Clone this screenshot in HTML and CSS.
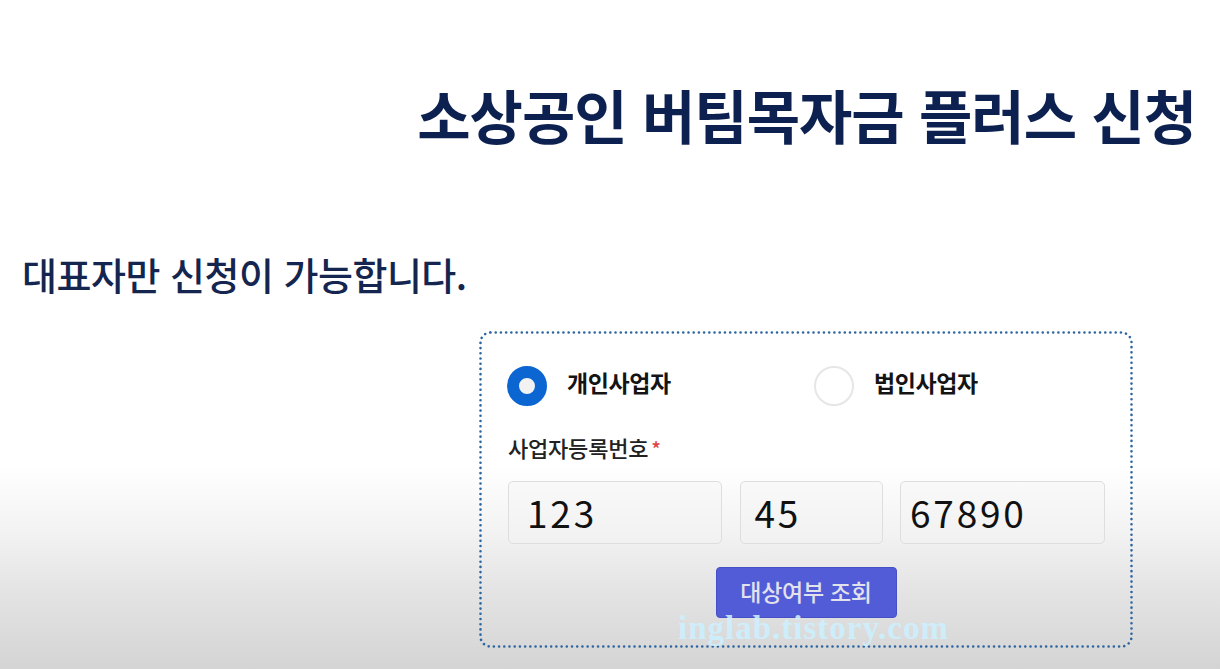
FILE: index.html
```html
<!DOCTYPE html>
<html lang="ko">
<head>
<meta charset="utf-8">
<title>소상공인 버팀목자금 플러스 신청</title>
<link rel="stylesheet" href="styles.css">
</head>
<body>
<div class="page">
  <h1 class="title">소상공인 버팀목자금 플러스 신청</h1>
  <p class="notice">대표자만 신청이 가능합니다.</p>
  <div class="card">
    <svg class="card-border" width="654" height="317" viewBox="0 0 654 317">
      <rect x="1.5" y="1.5" width="651" height="314" rx="10" ry="10" fill="none" stroke="#2c66a0" stroke-width="2.6" stroke-linecap="round" stroke-dasharray="0.01 5.2"/>
    </svg>
    <div class="radio-row">
      <label class="option option-first">
        <span class="radio radio-on"></span>
        <span class="option-text">개인사업자</span>
      </label>
      <label class="option">
        <span class="radio"></span>
        <span class="option-text">법인사업자</span>
      </label>
    </div>
    <div class="field-label">사업자등록번호<span class="req">*</span></div>
    <div class="inputs">
      <div class="input">123</div>
      <div class="input input-mid">45</div>
      <div class="input input-last">67890</div>
    </div>
    <div class="actions">
      <button class="btn" type="button">대상여부 조회</button>
    </div>
    <div class="watermark">inglab.tistory.com</div>
  </div>
</div>
</body>
</html>
```

FILE: styles.css
```css
html, body {
  margin: 0;
  padding: 0;
}
body {
  width: 1220px;
  height: 669px;
  overflow: hidden;
  background: linear-gradient(to bottom, #ffffff 0px, #ffffff 465px, #f3f3f3 530px, #e4e4e4 590px, #d4d4d4 669px);
  font-family: "Noto Sans CJK KR", "Noto Sans", sans-serif;
}
.page {
  display: flex;
  flex-direction: column;
}
.title {
  margin: 79px 24px 0 0;
  text-align: right;
  font-size: 58px;
  line-height: 70px;
  font-weight: 700;
  color: #0c2150;
  letter-spacing: -1px;
}
.notice {
  margin: 101px 0 0 22px;
  font-size: 38px;
  line-height: 48px;
  font-weight: 500;
  color: #142650;
  letter-spacing: -0.5px;
}
.card {
  position: relative;
  margin: 34px 0 0 480px;
  width: 652px;
  height: 315px;
  box-sizing: border-box;
  padding: 34px 27px 0 27px;
  display: flex;
  flex-direction: column;
}
.card-border {
  position: absolute;
  left: -1px;
  top: -1px;
  pointer-events: none;
}
.radio-row {
  display: flex;
  height: 40px;
}
.option {
  display: flex;
  align-items: center;
  flex: 1 1 auto;
}
.option-first {
  flex: none;
  width: 307px;
}
.radio {
  width: 40px;
  height: 40px;
  border-radius: 50%;
  box-sizing: border-box;
  border: 2px solid #e6e6e6;
  background: #fff;
  flex: none;
}
.radio-on {
  border: 12px solid #0b66d2;
  background: #f2f2f2;
}
.option-text {
  margin: 0 0 8px 20px;
  font-size: 23px;
  line-height: 32px;
  font-weight: 700;
  color: #141414;
  letter-spacing: -0.4px;
}
.field-label {
  margin-top: 26px;
  font-size: 22px;
  line-height: 30px;
  font-weight: 500;
  color: #222;
  letter-spacing: -0.2px;
  padding-left: 1px;
}
.req {
  color: #e04545;
  margin-left: 3px;
  font-size: 20px;
}
.inputs {
  margin-top: 17px;
  display: grid;
  grid-template-columns: 214px 143px 205px;
  column-gap: 17.5px;
  padding-left: 1px;
}
.input {
  height: 63px;
  box-sizing: border-box;
  border: 1.5px solid #dedede;
  border-radius: 5px;
  background: linear-gradient(to bottom, #f9f9f9, #f1f1f1);
  padding: 0 0 0 18px;
  font-size: 37px;
  line-height: 60px;
  letter-spacing: 2.8px;
  color: #111;
  font-weight: 400;
}
.input-mid {
  padding-left: 14px;
}
.input-last {
  padding-left: 9px;
}
.actions {
  margin-top: 23px;
  display: flex;
  justify-content: center;
}
.btn {
  width: 181px;
  height: 51px;
  border: 1px solid #4550c6;
  border-radius: 4px;
  background: #535cd7;
  color: #e2e2ec;
  font-family: "Noto Sans CJK KR", "Noto Sans", sans-serif;
  font-size: 23px;
  font-weight: 500;
  letter-spacing: -0.3px;
  padding: 0 0 4px 0;
}
.watermark {
  position: absolute;
  left: 198px;
  top: 276px;
  font-family: "Liberation Serif", "Times New Roman", serif;
  font-weight: 700;
  font-size: 33px;
  line-height: 40px;
  letter-spacing: 1px;
  color: rgba(205, 240, 255, 0.9);
  pointer-events: none;
}
```
